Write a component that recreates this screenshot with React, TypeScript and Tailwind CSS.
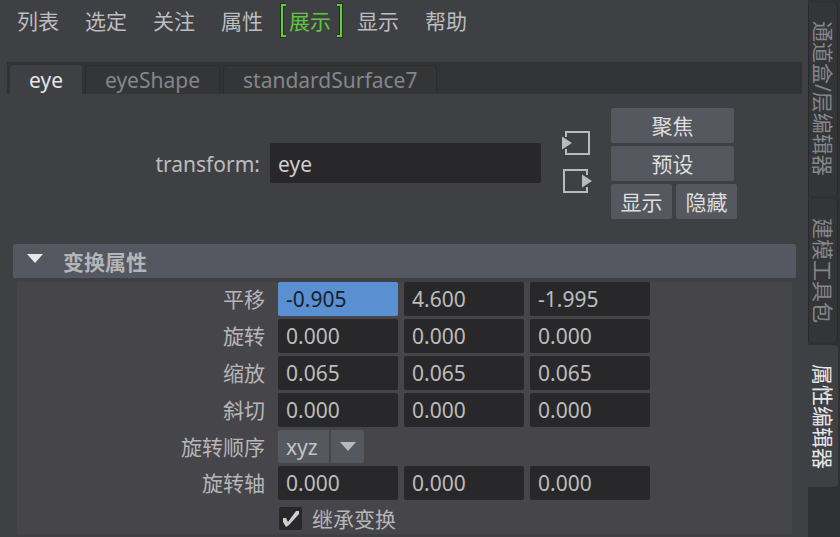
import { useState } from 'react'

const MENU_ITEMS = ['列表', '选定', '关注', '属性', '展示', '显示', '帮助']
const NODE_TABS = ['eye', 'eyeShape', 'standardSurface7']

const VECTOR_ROWS = [
  { label: '平移', values: ['-0.905', '4.600', '-1.995'] },
  { label: '旋转', values: ['0.000', '0.000', '0.000'] },
  { label: '缩放', values: ['0.065', '0.065', '0.065'] },
  { label: '斜切', values: ['0.000', '0.000', '0.000'] },
]

const SIDE_TABS = [
  { label: '通道盒/层编辑器', style: 'h-[193px] pt-[18px] mb-[3px]' },
  { label: '建模工具包', style: 'h-[143px] pt-[19px] mb-[3px]' },
  { label: '属性编辑器', style: 'h-[142px] pt-[19px]' },
]

const BUTTON = 'h-[35px] rounded-xs bg-[#55585e] text-[#dededf] hover:bg-[#5f636a]'

function MenuBar() {
  return (
    <nav className="flex h-[62px] items-start gap-[26px] pl-[17px] pt-[5px]">
      {MENU_ITEMS.map((item) => (
        <button
          key={item}
          type="button"
          className={`relative h-8 shrink-0 ${item === '展示' ? 'text-[#5fc63f]' : 'text-[#bcbdbf]'}`}
        >
          {item}
          {item === '展示' && (
            <svg className="absolute -left-2.5 -top-1 h-[37px] w-[64px]" viewBox="0 0 64 37" fill="none">
              <g stroke="#1c3614" strokeWidth="4">
                <path d="M7 4H3v31h4M58 4h4v31h-4" />
              </g>
              <g stroke="#66c846" strokeWidth="2">
                <path d="M7 4H3v31h4M58 4h4v31h-4" />
              </g>
            </svg>
          )}
        </button>
      ))}
    </nav>
  )
}

function NodeTabs({ active, onSelect }: { active: string; onSelect: (tab: string) => void }) {
  return (
    <div role="tablist" className="ml-[7px] mr-1.5 flex h-8 items-end gap-[3px] bg-[#323335] pl-[3px]">
      {NODE_TABS.map((tab) => (
        <button
          key={tab}
          type="button"
          role="tab"
          aria-selected={tab === active}
          onClick={() => onSelect(tab)}
          className={`h-[29px] rounded-t-sm px-[19px] leading-7 ${
            tab === active
              ? 'bg-[#3f4043] text-[#e6e6e7]'
              : 'border-x border-t border-[#2b2c2e] bg-[#343537] text-[#85868b]'
          }`}
        >
          {tab}
        </button>
      ))}
    </div>
  )
}

function NodeHeader() {
  return (
    <div className="flex items-start pt-3.5 pr-[71px]">
      <div className="flex min-w-0 flex-1 items-center justify-end pt-[35px]">
        <label htmlFor="node-name" className="pr-2.5 pt-0.5 text-[#bcbdbf]">
          transform:
        </label>
        <input
          id="node-name"
          defaultValue="eye"
          className="h-10 w-[271px] rounded-xs bg-[#28282a] px-2 pt-0.5 text-[#cfcfd0] outline-none"
        />
      </div>
      <div className="ml-5 mr-[18px] flex flex-col gap-2.5 pt-[21px]">
        <button type="button" aria-label="输入" className="h-7 w-8">
          <svg viewBox="0 0 32 28" className="h-7 w-8">
            <path d="M5 8V3h23v22H5v-5" fill="none" stroke="#b9babc" strokeWidth="2" />
            <path d="M1 7.5 11 14 1 20.500z" fill="#b9babc" />
          </svg>
        </button>
        <button type="button" aria-label="输出" className="h-7 w-8">
          <svg viewBox="0 0 32 28" className="h-7 w-8">
            <path d="M26 8V3H3v22h23v-5" fill="none" stroke="#b9babc" strokeWidth="2" />
            <path d="M21 7.500 31 14 21 20.500z" fill="#b9babc" />
          </svg>
        </button>
      </div>
      <div className="flex flex-col gap-[3px]">
        <button type="button" className={`${BUTTON} w-[123px]`}>聚焦</button>
        <button type="button" className={`${BUTTON} w-[123px]`}>预设</button>
        <div className="flex gap-1">
          <button type="button" className={`${BUTTON} w-[61px]`}>显示</button>
          <button type="button" className={`${BUTTON} w-[61px]`}>隐藏</button>
        </div>
      </div>
    </div>
  )
}

function VectorRow({ label, values, highlight }: { label: string; values: string[]; highlight?: boolean }) {
  return (
    <div role="group" aria-label={label} className="flex items-center">
      <span className="mr-[13px] w-[248px] shrink-0 text-right">{label}</span>
      <div className="flex gap-1.5">
        {values.map((value, i) => (
          <input
            key={i}
            defaultValue={value}
            aria-label={`${label} ${'XYZ'[i]}`}
            className={`h-[34px] w-[120px] rounded-xs px-2 outline-none ${
              highlight && i === 0 ? 'bg-[#5890d1] text-[#17202b]' : 'bg-[#28282a] text-[#bcbcbd]'
            }`}
          />
        ))}
      </div>
    </div>
  )
}

function TransformSection() {
  const [open, setOpen] = useState(true)

  return (
    <section className="ml-[13px] mr-3 mt-[25px]">
      <button
        type="button"
        aria-expanded={open}
        onClick={() => setOpen(!open)}
        className="flex h-[34px] w-full items-center rounded-xs bg-[#555860] pl-3.5 text-left font-bold text-[#b4b5b8]"
      >
        <svg viewBox="0 0 16 9" className="mb-1.5 mr-5 h-[9px] w-4">
          <path d="M0 0h16L8 9z" fill="#e8e8e8" />
        </svg>
        <span className="pt-0.5">变换属性</span>
      </button>
      {open && (
        <div className="mx-1 mt-1 flex flex-col gap-[3px] bg-[#464549] text-[#b6b6b9]">
          {VECTOR_ROWS.map((row, i) => (
            <VectorRow key={row.label} label={row.label} values={row.values} highlight={i === 0} />
          ))}
          <div className="flex items-center gap-[13px]">
            <label htmlFor="rotate-order" className="w-[248px] shrink-0 text-right">旋转顺序</label>
            <div className="relative">
              <select
                id="rotate-order"
                className="block h-[33px] w-[86px] appearance-none rounded-xs bg-[#55585e] pl-2 text-[#c4c4c6] outline-none"
              >
                <option>xyz</option>
                <option>yzx</option>
                <option>zxy</option>
                <option>xzy</option>
                <option>yxz</option>
                <option>zyx</option>
              </select>
              <span className="pointer-events-none absolute inset-y-0 right-0 flex w-[35px] items-center justify-center border-l-2 border-[#464549]">
                <svg viewBox="0 0 16 9" className="h-[9px] w-4">
                  <path d="M0 0h16L8 9z" fill="#b9babc" />
                </svg>
              </span>
            </div>
          </div>
          <VectorRow label="旋转轴" values={['0.000', '0.000', '0.000']} />
          <label className="ml-[262px] flex h-[31px] w-fit items-center gap-2.5">
            <span className="relative h-[23px] w-[23px]">
              <input type="checkbox" defaultChecked className="peer block h-[23px] w-[23px] appearance-none rounded-xs bg-[#28282a]" />
              <svg viewBox="0 0 23 23" className="pointer-events-none absolute inset-0 hidden peer-checked:block">
                <path d="M4 11h3l2 4 8-11h3v3L10 18l-3 2-3-5z" fill="#cfcfd0" />
              </svg>
            </span>
            继承变换
          </label>
        </div>
      )}
    </section>
  )
}

function SideTabs() {
  return (
    <aside role="tablist" aria-orientation="vertical" className="flex w-8 shrink-0 flex-col bg-[#303133] pt-[3px] pr-0.5">
      {SIDE_TABS.map((tab) => {
        const active = tab.label === '属性编辑器'
        return (
          <button
            key={tab.label}
            type="button"
            role="tab"
            aria-selected={active}
            className={`flex w-full items-center justify-start rounded-r-sm text-left leading-[30px] [writing-mode:vertical-rl] [text-orientation:sideways] ${tab.style} ${
              active ? 'bg-[#3f4043] text-[#e6e6e7]' : 'border-y border-r border-[#29292b] bg-[#343537] text-[#85868b]'
            }`}
          >
            {tab.label}
          </button>
        )
      })}
    </aside>
  )
}

export default function App() {
  const [tab, setTab] = useState('eye')

  return (
    <div className="flex min-h-screen bg-[#3f4043] font-['Noto_Sans','Noto_Sans_CJK_SC',sans-serif] text-[21px] leading-8">
      <main className="min-w-0 flex-1">
        <MenuBar />
        <NodeTabs active={tab} onSelect={setTab} />
        <NodeHeader />
        <TransformSection />
      </main>
      <SideTabs />
    </div>
  )
}
